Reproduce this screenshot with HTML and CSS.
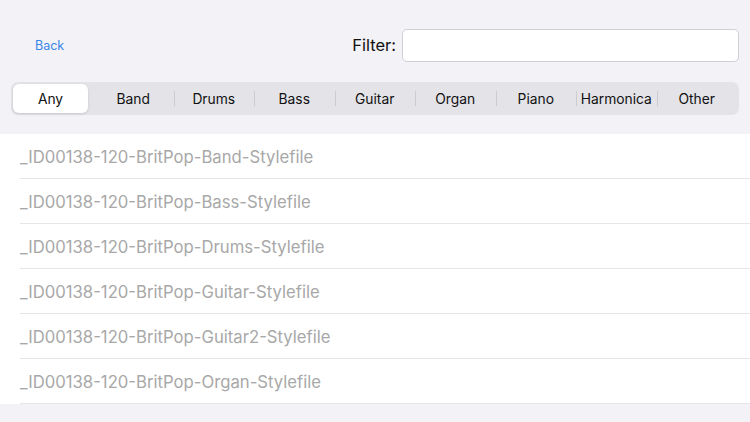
FILE: index.html
```html
<!DOCTYPE html>
<html>
<head>
<meta charset="utf-8">
<link rel="stylesheet" href="styles.css">
</head>
<body>
<div class="top">
  <a class="back">Back</a>
  <div class="filter">
    <span class="filter-label">Filter:</span>
    <div class="filter-input"></div>
  </div>
</div>
<div class="seg">
  <div class="seg-item active">Any</div>
  <div class="seg-item">Band</div>
  <div class="seg-item">Drums</div>
  <div class="seg-item">Bass</div>
  <div class="seg-item">Guitar</div>
  <div class="seg-item">Organ</div>
  <div class="seg-item">Piano</div>
  <div class="seg-item">Harmonica</div>
  <div class="seg-item">Other</div>
</div>
<div class="list">
  <div class="row"><span>_ID00138-120-BritPop-Band-Stylefile</span></div>
  <div class="row"><span>_ID00138-120-BritPop-Bass-Stylefile</span></div>
  <div class="row"><span>_ID00138-120-BritPop-Drums-Stylefile</span></div>
  <div class="row"><span>_ID00138-120-BritPop-Guitar-Stylefile</span></div>
  <div class="row"><span>_ID00138-120-BritPop-Guitar2-Stylefile</span></div>
  <div class="row"><span>_ID00138-120-BritPop-Organ-Stylefile</span></div>
</div>
</body>
</html>
```
FILE: styles.css
```css
html, body {
  margin: 0;
  padding: 0;
  background: #f2f2f7;
  font-family: Inter, "Noto Sans", sans-serif;
  width: 750px;
  height: 422px;
  overflow: hidden;
}
.top {
  display: flex;
  align-items: center;
  justify-content: space-between;
  height: 34px;
  padding: 28px 11px 0 35px;
}
.back {
  color: #3a86e8;
  font-size: 12.5px;
}
.filter {
  display: flex;
  align-items: center;
  gap: 6px;
}
.filter-label {
  font-size: 16.5px;
  color: #111;
}
.filter-input {
  width: 335px;
  height: 31px;
  background: #fff;
  border: 1px solid #cfcfd4;
  border-radius: 5px;
}
.seg {
  display: flex;
  margin: 20px 11px 0 11px;
  height: 33px;
  padding: 2px;
  box-sizing: border-box;
  background: #e3e3e8;
  border-radius: 7px;
}
.seg-item {
  flex: 1 1 0;
  min-width: 0;
  display: flex;
  align-items: center;
  justify-content: center;
  font-size: 13.8px;
  color: #111;
  position: relative;
}
.seg-item + .seg-item::before {
  content: "";
  position: absolute;
  left: 0;
  top: 7px;
  bottom: 7px;
  width: 1px;
  background: #cbcbd0;
}
.seg-item.active {
  flex: 0 0 75px;
  margin-right: 5px;
  background: #fff;
  border-radius: 6px;
  box-shadow: 0 1px 3px rgba(0,0,0,0.12);
}
.seg-item.active + .seg-item::before { display: none; }
.list {
  margin-top: 19px;
  background: #fff;
}
.row {
  height: 45px;
  margin-left: 20px;
  border-bottom: 1px solid #e6e6ea;
  box-sizing: border-box;
  display: flex;
  align-items: center;
  padding-top: 1px;
  font-size: 16.7px;
  color: #a8a8a8;
}
```
